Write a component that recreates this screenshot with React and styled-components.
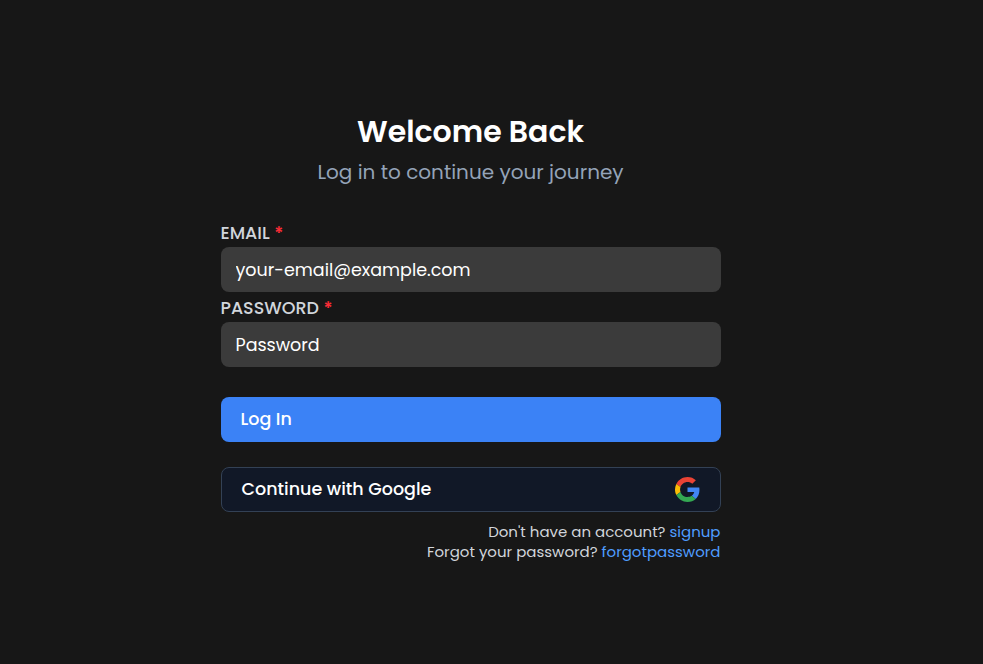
import React from "react";
import styled, { createGlobalStyle } from "styled-components";

const GlobalStyle = createGlobalStyle`
  *, *::before, *::after { box-sizing: border-box; }
  body {
    margin: 0;
    background: #171717;
    color: #ffffff;
    font-family: Poppins, Inter, "Liberation Sans", sans-serif;
  }
`;

const Page = styled.main`
  min-height: 100vh;
  padding: 112px 0 0 220.5px;
  overflow: hidden;
`;

const Form = styled.form`
  width: 500px;
  display: flex;
  flex-direction: column;
`;

const Header = styled.header`
  height: 108px;
  text-align: center;
  white-space: nowrap;
`;

const Title = styled.h1`
  margin: 0;
  font-size: 30px;
  line-height: 40px;
  font-weight: 600;
`;

const Subtitle = styled.p`
  margin: 2px 0 0;
  font-size: 20px;
  line-height: 36px;
  color: #94a3b8;
`;

const Field = styled.div`
  height: 75px;
`;

const Label = styled.label`
  display: block;
  height: 27px;
  font-size: 17.5px;
  line-height: 26px;
  font-weight: 500;
  color: #d1d5db;
`;

const Required = styled.span`
  color: #fb2c36;
  font-weight: 600;
`;

const Input = styled.input`
  display: block;
  width: 100%;
  height: 45px;
  padding: 0 15px;
  border: 0;
  border-radius: 8px;
  outline: none;
  background: #3b3b3b;
  color: #ffffff;
  font: 400 17.5px/27px Poppins, Inter, "Liberation Sans", sans-serif;

  &::placeholder {
    color: #ffffff;
    opacity: 1;
  }
`;

const Button = styled.button`
  display: flex;
  align-items: center;
  justify-content: space-between;
  height: 45px;
  padding: 0 20px;
  border: 0;
  border-radius: 8px;
  background: #3b82f6;
  color: #ffffff;
  font: 500 17.5px/27px Poppins, Inter, "Liberation Sans", sans-serif;
  cursor: pointer;
`;

const LoginButton = styled(Button)`
  margin-top: 27px;
`;

const GoogleButton = styled(Button)`
  margin-top: 25px;
  border: 1px solid #334155;
  background: #111827;
`;

const ButtonText = styled.span`
  padding-bottom: 1px;
`;

const GoogleMark = styled.svg`
  width: 25px;
  height: 25px;
`;

const Links = styled.footer`
  margin-top: 10px;
  text-align: right;
  color: #d1d5db;
`;

const LinkLine = styled.p`
  margin: 0;
  font-size: 15px;
  line-height: 20px;
  white-space: nowrap;
`;

const Link = styled.a`
  color: #4f9dff;
  text-decoration: none;
`;

function GoogleIcon() {
  return (
    <GoogleMark viewBox="0 0 48 48" aria-hidden="true">
      <path fill="#EA4335" d="M24 9.5c3.54 0 6.71 1.22 9.21 3.6l6.85-6.85C35.9 2.38 30.47 0 24 0 14.62 0 6.51 5.38 2.56 13.22l7.98 6.19C12.43 13.72 17.74 9.5 24 9.5z" />
      <path fill="#4285F4" d="M46.98 24.55c0-1.57-.15-3.09-.38-4.55H24v9.02h12.94c-.58 2.96-2.26 5.48-4.78 7.18l7.73 6c4.51-4.18 7.09-10.36 7.09-17.65z" />
      <path fill="#FBBC05" d="M10.53 28.59c-.48-1.45-.76-2.99-.76-4.59s.27-3.14.76-4.59l-7.98-6.19C.92 16.46 0 20.12 0 24c0 3.88.92 7.54 2.56 10.78l7.97-6.19z" />
      <path fill="#34A853" d="M24 48c6.48 0 11.93-2.13 15.89-5.81l-7.73-6c-2.15 1.45-4.92 2.3-8.16 2.3-6.26 0-11.57-4.22-13.47-9.91l-7.98 6.19C6.51 42.62 14.62 48 24 48z" />
    </GoogleMark>
  );
}

export default function App() {
  return (
    <>
      <GlobalStyle />
      <Page>
        <Form onSubmit={(event) => event.preventDefault()}>
          <Header>
            <Title>Welcome Back</Title>
            <Subtitle>Log in to continue your journey</Subtitle>
          </Header>
          <Field>
            <Label htmlFor="email">
              EMAIL <Required>*</Required>
            </Label>
            <Input id="email" type="email" placeholder="your-email@example.com" />
          </Field>
          <Field>
            <Label htmlFor="password">
              PASSWORD <Required>*</Required>
            </Label>
            <Input id="password" type="password" placeholder="Password" />
          </Field>
          <LoginButton type="submit">
            <ButtonText>Log In</ButtonText>
          </LoginButton>
          <GoogleButton type="button">
            <ButtonText>Continue with Google</ButtonText>
            <GoogleIcon />
          </GoogleButton>
          <Links>
            <LinkLine>
              Don't have an account? <Link href="#signup">signup</Link>
            </LinkLine>
            <LinkLine>
              Forgot your password? <Link href="#forgotpassword">forgotpassword</Link>
            </LinkLine>
          </Links>
        </Form>
      </Page>
    </>
  );
}
